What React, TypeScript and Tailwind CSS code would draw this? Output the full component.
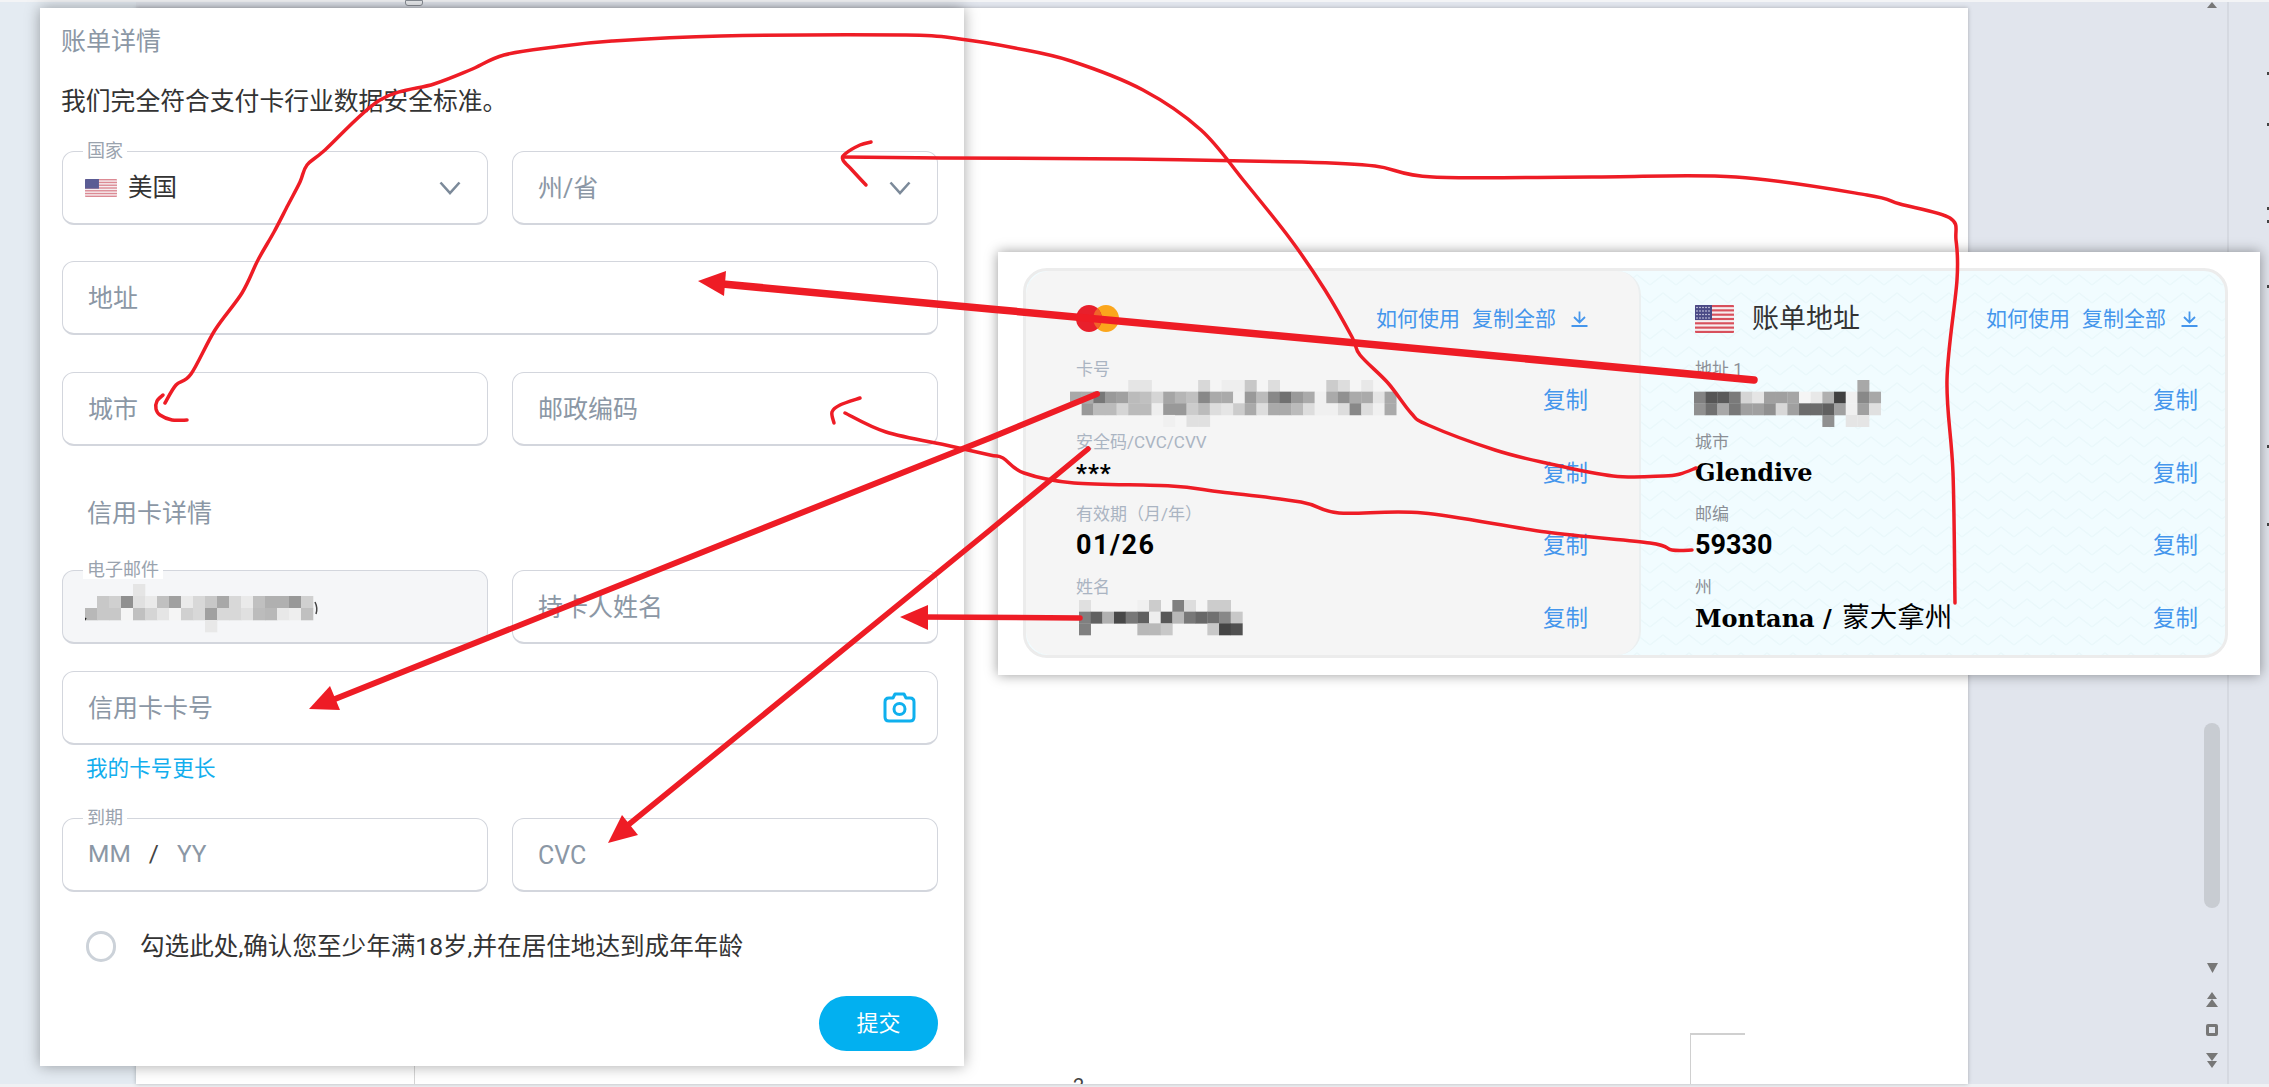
import React from "react";

const INK = "#ee1c25";

function Mosaic({ rows, cell, w, h, className, children }: { rows: string[]; cell: number; w: number; h: number; className?: string; children?: React.ReactNode }) {
  return (
    <svg width={w} height={h} viewBox={`0 0 ${w} ${h}`} className={className} style={{ filter: "blur(0.6px)" }}>
      {rows.map((row, y) =>
        row.split(" ").map((v, x) =>
          v === "__" ? null : <rect key={`${x}-${y}`} x={x * cell} y={y * cell} width={cell + 0.3} height={cell + 0.3} fill={`#${v}${v}${v}`} />
        )
      )}
      {children}
    </svg>
  );
}

function UsFlag({ w, h, faded }: { w: number; h: number; faded?: boolean }) {
  const stripes = [];
  for (let i = 0; i < 13; i += 2) stripes.push(<rect key={i} x="0" y={(i * 28) / 13} width="39" height={28 / 13} fill={faded ? "#dc8a94" : "#d8505c"} />);
  return (
    <svg width={w} height={h} viewBox="0 0 39 28" preserveAspectRatio="none" className="shrink-0 rounded-[1px]">
      <rect width="39" height="28" fill="#f6eef0" />
      {stripes}
      <rect width="17" height="15" fill={faded ? "#5a5c94" : "#4a4a86"} />
      {!faded &&
        [2, 5, 8, 11, 14].map((x) =>
          [2.5, 6, 9.5, 13].map((y) => <circle key={`${x}-${y}`} cx={x} cy={y} r="0.8" fill="#dfe0ee" />)
        )}
    </svg>
  );
}

function Chevron() {
  return (
    <svg width="22" height="14" viewBox="0 0 22 14" fill="none" stroke="#7c8a9a" strokeWidth="2.6">
      <path d="M1.5 1.5 L11 12 L20.5 1.5" />
    </svg>
  );
}

function Field({ legend, placeholder, children, right, className = "", bg = "bg-white" }: { legend?: string; placeholder?: string; children?: React.ReactNode; right?: React.ReactNode; className?: string; bg?: string }) {
  return (
    <div className={`relative flex h-[74px] items-center justify-between rounded-[12px] border-[1.5px] border-b-[2.5px] border-[#d3d6dd] pl-[25px] pr-[26px] ${bg} ${className}`}>
      {legend && <span className="absolute left-[20px] top-[-10px] bg-white px-[4px] text-[18px] leading-[18px] text-[#9aa3ae]">{legend}</span>}
      {children ?? <span className="pt-[2px] text-[25px] text-[#8b97a5]">{placeholder}</span>}
      {right}
    </div>
  );
}

function BillingForm() {
  return (
    <div className="absolute left-[40px] top-[8px] flex h-[1058px] w-[924px] flex-col bg-white pl-[22px] pr-[26px] pt-[19px] shadow-[0_0_14px_rgba(0,0,0,0.35)]">
      <div className="-ml-[1px] text-[25px] leading-[30px] text-[#8b97a5]">账单详情</div>
      <div className="-ml-[1px] mt-[29px] text-[24.8px] leading-[32px] text-[#333]">我们完全符合支付卡行业数据安全标准。</div>
      <div className="mt-[33px] grid grid-cols-2 gap-[24px]">
        <Field legend="国家" right={<Chevron />}>
          <div className="-ml-[3px] flex items-center gap-[11px]">
            <UsFlag w={32} h={18} faded />
            <span className="pt-[2px] text-[24.5px] text-[#333]">美国</span>
          </div>
        </Field>
        <Field placeholder="州/省" right={<Chevron />} />
      </div>
      <Field placeholder="地址" className="mt-[36px]" />
      <div className="mt-[37px] grid grid-cols-2 gap-[24px]">
        <Field placeholder="城市" />
        <Field placeholder="邮政编码" />
      </div>
      <div className="mt-[53px] pl-[25px] text-[25px] leading-[30px] text-[#8b97a5]">信用卡详情</div>
      <div className="mt-[41px] grid grid-cols-2 gap-[24px]">
        <Field legend="电子邮件" bg="bg-[#f5f6f8]">
          <Mosaic
            className="-ml-[3px] mt-[4px]"
            cell={12}
            w={246}
            h={50}
            rows={[
              "__ __ __ __ e5 __ __ __ __ __ __ __ __ __ __ __ __ __ __ __",
              "__ c8 d0 90 e0 ea c0 a0 ea d8 c8 a8 d8 ea c0 b0 b0 98 d0 __",
              "b8 c8 c8 f5 c0 d5 e5 f5 d0 d8 a0 d8 d8 e0 bc b8 e8 ee c0 __",
              "__ __ __ __ __ __ __ __ __ __ e8 __ __ __ __ __ __ __ __ __",
            ]}
          >
            <path d="M1 34 L-1 37" stroke="#222" strokeWidth="1.5" />
            <path d="M230 18 Q233 24 231 30" fill="none" stroke="#444" strokeWidth="1.5" />
          </Mosaic>
        </Field>
        <Field placeholder="持卡人姓名" />
      </div>
      <Field
        placeholder="信用卡卡号"
        className="mt-[27px]"
        right={
          <svg width="33" height="31" viewBox="0 0 33 31" fill="none" stroke="#0fb0ee" strokeWidth="3" className="-mr-[5px]" strokeLinejoin="round">
            <path d="M10 6 L12 2 H21 L23 6 H27 Q31 6 31 10 V25 Q31 29 27 29 H6 Q2 29 2 25 V10 Q2 6 6 6 Z" />
            <circle cx="16.5" cy="17" r="5.5" />
          </svg>
        }
      />
      <div className="mt-[11px] pl-[24px] text-[21.6px] leading-[26px] text-[#12aeee]">我的卡号更长</div>
      <div className="mt-[36px] grid grid-cols-2 gap-[24px]">
        <Field legend="到期">
          <div className="flex items-center text-[24.5px] text-[#8b97a5]">
            <span>MM</span>
            <span className="ml-[18px] text-[#444]">/</span>
            <span className="ml-[18px]">YY</span>
          </div>
        </Field>
        <Field placeholder="CVC" />
      </div>
      <div className="mt-[39px] flex items-center gap-[24px] pl-[24px]">
        <span className="h-[31px] w-[30px] shrink-0 rounded-full border-[3px] border-[#ccd2d9]" />
        <span className="whitespace-nowrap text-[24.6px] leading-[31px] text-[#333]">勾选此处,确认您至少年满18岁,并在居住地达到成年年龄</span>
      </div>
      <button className="mt-[34px] h-[55px] w-[119px] self-end rounded-full bg-[#02b0f0] text-[22px] text-white">提交</button>
    </div>
  );
}

function DownloadIcon() {
  return (
    <svg width="17" height="16" viewBox="0 0 17 16" fill="none" stroke="#4596ec" strokeWidth="1.8">
      <path d="M8.5 0.5 V11 M3 6 L8.5 11.5 L14 6 M0.5 15 H16.5" />
    </svg>
  );
}

function HeaderLinks() {
  return (
    <div className="flex items-center text-[21px] leading-[28px] text-[#4596ec]">
      <span>如何使用</span>
      <span className="ml-[12px]">复制全部</span>
      <span className="ml-[15px]">
        <DownloadIcon />
      </span>
    </div>
  );
}

function Row({ label, labelClass, children }: { label: string; labelClass: string; children: React.ReactNode }) {
  return (
    <div className="flex h-[62px] items-end justify-between">
      <div className="flex flex-col">
        <span className={`h-[20px] text-[17px] leading-[20px] ${labelClass}`}>{label}</span>
        <div className="flex h-[42px] items-center whitespace-nowrap leading-[42px] text-black">{children}</div>
      </div>
      <span className="text-[22.5px] leading-[42px] text-[#4596ec]">复制</span>
    </div>
  );
}

function CardInfo() {
  const label = "text-[#aab4c2]";
  return (
    <div className="relative flex h-full w-[615px] flex-col rounded-[24px] border-r-[2px] border-[#ebeff0] bg-[#f5f5f5] pl-[50px] pr-[51px]">
      <div className="flex h-[88px] items-start justify-between pt-[34px]">
        <svg width="43" height="27" viewBox="0 0 43 27">
          <ellipse cx="30" cy="13.5" rx="13" ry="13.5" fill="#fba61c" />
          <ellipse cx="13" cy="13.5" rx="13" ry="13.5" fill="#e8202c" />
          <path d="M21.5 3.5 A13 13.5 0 0 1 21.5 23.5 A13 13.5 0 0 1 21.5 3.5 Z" fill="#f0652a" />
        </svg>
        <HeaderLinks />
      </div>
      <div className="flex flex-col gap-[10.5px]">
        <Row label="卡号" labelClass={label}>
          <Mosaic
            className="-ml-[6px] mt-[6px] shrink-0"
            cell={11.65}
            w={330}
            h={47}
            rows={[
              "__ __ __ __ __ e5 e5 __ __ __ __ d8 __ ee ee c8 __ dd __ __ __ __ cc dd __ e8 __ __ __",
              "a8 aa 77 99 a0 bb c0 d5 a5 b5 c0 88 aa aa f0 99 bb 88 70 99 aa f0 aa 90 aa aa e5 aa __",
              "__ 99 bb bb d5 bb bb ee 99 99 cc bb dd e5 cc aa dd aa aa bb dd f0 f0 dd 88 dd f0 aa __",
              "__ __ __ __ __ __ __ __ f0 __ e0 e0 __ __ __ __ __ __ __ __ __ __ __ __ __ __ __ __ __",
            ]}
          />
        </Row>
        <Row label="安全码/CVC/CVV" labelClass={label}>
          <span className="text-[24px] font-bold tracking-[1px]">***</span>
        </Row>
        <Row label="有效期（月/年）" labelClass={label}>
          <span className="text-[27px] font-bold tracking-[1.5px]">01/26</span>
        </Row>
        <Row label="姓名" labelClass={label}>
          <Mosaic
            className="ml-[3px] shrink-0"
            cell={11.67}
            w={165}
            h={36}
            rows={[
              "e0 __ __ __ __ f0 cc __ 80 dd __ cc cc __",
              "80 60 b0 48 78 60 ee 58 b8 78 68 70 88 c8",
              "80 __ __ __ __ b8 b8 c8 __ __ __ c8 45 50",
            ]}
          />
        </Row>
      </div>
    </div>
  );
}

function AddressInfo() {
  const label = "text-[#8b8f96]";
  return (
    <div className="relative flex h-full flex-1 flex-col pl-[54px] pr-[27px]">
      <div className="flex h-[88px] items-start justify-between pt-[34px]">
        <div className="flex items-center gap-[18px]">
          <UsFlag w={39} h={28} />
          <span className="text-[27px] leading-[28px] text-[#333]">账单地址</span>
        </div>
        <HeaderLinks />
      </div>
      <div className="flex flex-col gap-[10.5px]">
        <Row label="地址 1" labelClass={label}>
          <Mosaic
            className="-ml-[1px] mt-[6px] shrink-0"
            cell={11.67}
            w={195}
            h={47}
            rows={[
              "__ __ __ __ __ __ __ __ __ __ __ __ __ __ a8 __",
              "80 55 5a 7a d5 e5 a0 a0 a5 f5 e8 b0 40 f0 88 a8",
              "90 70 a8 78 a0 a0 90 d8 a0 6c 6c 60 a0 f0 a0 e0",
              "__ __ __ __ __ __ __ __ __ __ __ 90 __ e5 e5 __",
            ]}
          />
        </Row>
        <Row label="城市" labelClass={label}>
          <span className="text-[24px] font-bold" style={{ fontFamily: "'DejaVu Serif', serif" }}>Glendive</span>
        </Row>
        <Row label="邮编" labelClass={label}>
          <span className="text-[27px] font-bold">59330</span>
        </Row>
        <Row label="州" labelClass={label}>
          <span className="text-[24px] font-bold" style={{ fontFamily: "'DejaVu Serif', 'Noto Sans CJK SC', serif" }}>
            Montana / <span className="ml-[2px] text-[27.5px] font-normal">蒙大拿州</span>
          </span>
        </Row>
      </div>
    </div>
  );
}

function BillingCard() {
  return (
    <div className="absolute left-[998px] top-[252px] h-[423px] w-[1262px] bg-white pb-[17px] pl-[25px] pr-[32px] pt-[16px] shadow-[0_0_12px_rgba(0,0,0,0.4)]">
      <div className="relative flex h-full overflow-hidden rounded-[24px] border-[3px] border-[#ececec] bg-[#f1fcff]">
        <svg className="absolute inset-0 h-full w-full" aria-hidden="true">
          <defs>
            <pattern id="chev" width="26" height="18" patternUnits="userSpaceOnUse">
              <path d="M0 14 L13 4 L26 14" fill="none" stroke="#eaf8fb" strokeWidth="1.5" />
            </pattern>
          </defs>
          <rect width="100%" height="100%" fill="url(#chev)" />
        </svg>
        <CardInfo />
        <AddressInfo />
      </div>
    </div>
  );
}

function smooth(pts: number[][]): string {
  let d = `M${pts[0][0]} ${pts[0][1]}`;
  for (let i = 0; i < pts.length - 1; i++) {
    const p0 = pts[Math.max(i - 1, 0)];
    const p1 = pts[i];
    const p2 = pts[i + 1];
    const p3 = pts[Math.min(i + 2, pts.length - 1)];
    const c1x = p1[0] + (p2[0] - p0[0]) / 6;
    const c1y = p1[1] + (p2[1] - p0[1]) / 6;
    const c2x = p2[0] - (p3[0] - p1[0]) / 6;
    const c2y = p2[1] - (p3[1] - p1[1]) / 6;
    d += ` C${c1x} ${c1y} ${c2x} ${c2y} ${p2[0]} ${p2[1]}`;
  }
  return d;
}

const CURVES: number[][][] = [
  [[187, 420], [172, 420], [160, 415], [156, 409], [157, 401], [163, 395]],
  [[165, 403], [176, 385], [191, 374], [215, 330], [242, 293], [258, 260], [274, 232], [288, 205], [300, 182], [307, 165], [325, 150], [380, 100], [434, 84], [470, 70], [504, 55], [555, 47], [612, 41], [721, 36], [906, 35], [960, 39], [1015, 48], [1071, 61], [1143, 90], [1201, 130], [1244, 181], [1291, 240], [1325, 290], [1352, 337], [1360, 355], [1388, 383], [1411, 413], [1428, 425], [1495, 450], [1546, 463], [1613, 476], [1664, 476], [1680, 474], [1696, 468]],
  [[1692, 550], [1672, 550], [1650, 543], [1546, 532], [1423, 513], [1339, 513], [1301, 502], [1221, 492], [1171, 486], [1074, 483], [1024, 473], [1003, 458], [990, 455], [950, 446], [886, 432], [845, 413]],
  [[860, 398], [840, 405], [832, 412], [834, 423]],
  [[1955, 603], [1953, 473], [1947, 380], [1957, 280], [1956, 240], [1950, 218], [1900, 204], [1867, 195], [1736, 177], [1592, 177], [1433, 177], [1375, 166], [1302, 162], [1129, 159], [941, 158], [843, 157]],
  [[871, 142], [860, 145], [845, 154], [843, 160], [852, 170], [866, 185]],
];

function Strokes() {
  return (
    <svg className="pointer-events-none absolute inset-0" width="2269" height="1087" viewBox="0 0 2269 1087">
      {CURVES.map((c, i) => (
        <path key={i} d={smooth(c)} fill="none" stroke={INK} strokeWidth="3.5" strokeLinecap="round" strokeLinejoin="round" />
      ))}
      <path d="M1754 380 L990 309 L712 283" fill="none" stroke={INK} strokeWidth="7.5" strokeLinecap="round" />
      <polygon points="698,281 726,271 724,296" fill={INK} />

      <path d="M1097 394 L990 438 L733 540 L325 703" fill="none" stroke={INK} strokeWidth="6" strokeLinecap="round" />
      <polygon points="309,709 330,686 340,710" fill={INK} />

      <path d="M1088 449 L990 530 L622 830" fill="none" stroke={INK} strokeWidth="5.5" strokeLinecap="round" />
      <polygon points="608,843 622,815 638,835" fill={INK} />

      <path d="M1080 618 L920 617" fill="none" stroke={INK} strokeWidth="5.5" strokeLinecap="round" />
      <polygon points="900,617 928,605 928,630" fill={INK} />
    </svg>
  );
}

function ScrollColumn() {
  const c = "#777";
  return (
    <div className="flex w-[261px] flex-col items-end border-r-[2px] border-[#d5d9e1] bg-[#e1e5ed] pr-[7px]">
      <div className="flex w-[16px] flex-col items-center">
        <svg width="10" height="6" viewBox="0 0 10 6"><path d="M5 0 L10 6 H0 Z" fill={c} /></svg>
        <div className="mt-[715px] h-[185px] w-[16px] rounded-full bg-[#c8ccd2]" />
        <svg className="mt-[55px]" width="11" height="10" viewBox="0 0 11 10"><path d="M0 0 H11 L5.5 10 Z" fill={c} /></svg>
        <svg className="mt-[19px]" width="12" height="15" viewBox="0 0 12 15"><path d="M6 0 L11 7 H1 Z M6 7 L12 15 H0 Z" fill={c} /></svg>
        <div className="mt-[17px] h-[12px] w-[12px] rounded-[2px] border-[3px] border-[#777]" />
        <svg className="mt-[17px]" width="12" height="15" viewBox="0 0 12 15"><path d="M0 0 H12 L6 8 Z M1 8 H11 L6 15 Z" fill={c} /></svg>
      </div>
    </div>
  );
}

export default function App() {
  return (
    <div className="relative flex h-[1087px] w-[2269px] flex-col overflow-hidden bg-[#e1e5ed]" style={{ fontFamily: "Roboto, 'Noto Sans CJK SC', sans-serif" }}>
      <div className="h-[2px] bg-[#f3f4f6]" />
      <div className="flex flex-1">
        <div className="w-[136px] bg-[#e4ebf2]" />
        <div className="w-[1832px] pt-[6px]">
          <div className="relative h-full overflow-hidden bg-white shadow-[0_0_4px_rgba(0,0,0,0.25)]">
            <div className="absolute bottom-0 left-[278px] h-[60px] w-px bg-[#d5d5d5]" />
            <div className="absolute left-[1554px] top-[1025px] h-[70px] w-[55px] border-l border-t-2 border-[#d0d0d0]" />
            <span className="absolute left-[937px] top-[1066px] text-[20px] leading-[24px] text-[#444]">2</span>
          </div>
        </div>
        <ScrollColumn />
        <div className="relative flex-1 bg-[#e1e5ed]">
          {[70, 121, 205, 218, 283, 443, 521].map((y) => (
            <div key={y} className="absolute right-0 h-[3px] w-[2px] bg-[#444]" style={{ top: y }} />
          ))}
        </div>
      </div>
      <div className="h-[3px] bg-[#eff1f4]" />
      <div className="absolute left-[405px] top-0 h-[6px] w-[18px] rounded-b-[3px] border border-[#8a8f96] bg-[#eceef1]" />
      <BillingForm />
      <BillingCard />
      <Strokes />
    </div>
  );
}
